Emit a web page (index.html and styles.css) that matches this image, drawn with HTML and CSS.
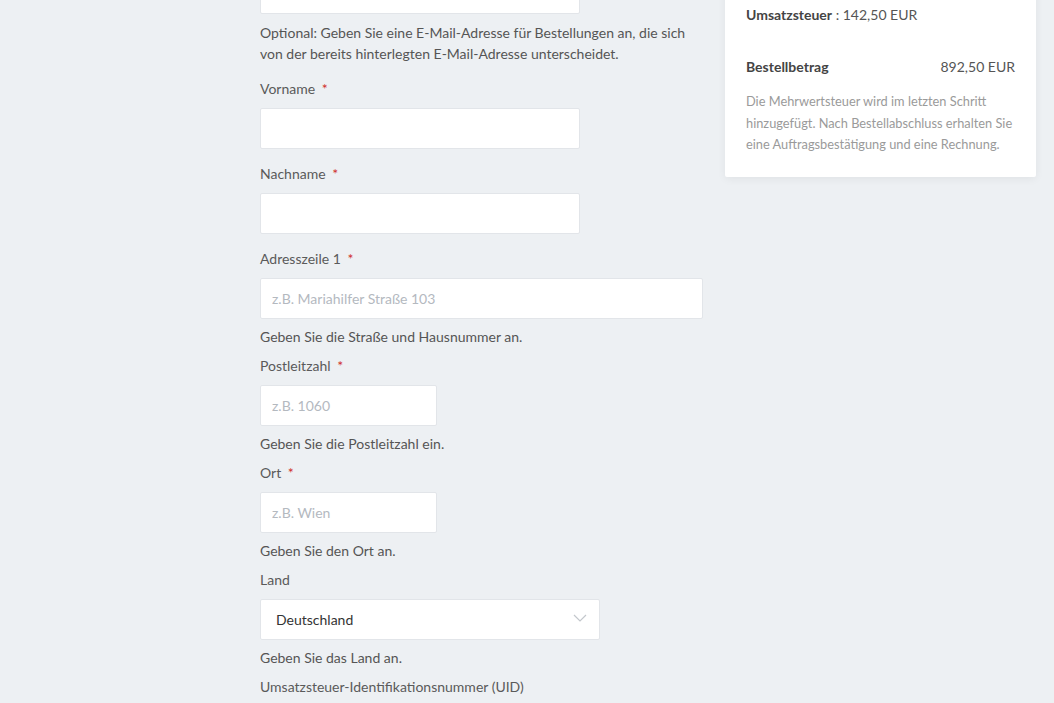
FILE: index.html
```html
<!DOCTYPE html>
<html lang="de">
<head>
    <meta charset="UTF-8">
    <meta name="viewport" content="width=device-width, initial-scale=1.0">
    <title>Rechnungsadresse</title>
    <link rel="stylesheet" href="styles.css">
</head>
<body>
    <div class="checkout">
        <form class="address-form">
            <div class="field field-first">
                <input type="email" class="input input-medium">
                <p class="help">Optional: Geben Sie eine E-Mail-Adresse für Bestellungen an, die sich von der bereits hinterlegten E-Mail-Adresse unterscheidet.</p>
            </div>
            <div class="field">
                <label for="firstname">Vorname <span class="req">*</span></label>
                <input type="text" id="firstname" class="input input-medium">
            </div>
            <div class="field">
                <label for="lastname">Nachname <span class="req">*</span></label>
                <input type="text" id="lastname" class="input input-medium">
            </div>
            <div class="field">
                <label for="street">Adresszeile 1 <span class="req">*</span></label>
                <input type="text" id="street" class="input input-wide" placeholder="z.B. Mariahilfer Straße 103">
                <p class="help">Geben Sie die Straße und Hausnummer an.</p>
            </div>
            <div class="field">
                <label for="zip">Postleitzahl <span class="req">*</span></label>
                <input type="text" id="zip" class="input input-small" placeholder="z.B. 1060">
                <p class="help">Geben Sie die Postleitzahl ein.</p>
            </div>
            <div class="field">
                <label for="city">Ort <span class="req">*</span></label>
                <input type="text" id="city" class="input input-small" placeholder="z.B. Wien">
                <p class="help">Geben Sie den Ort an.</p>
            </div>
            <div class="field">
                <label for="country">Land</label>
                <div class="select">
                    <select id="country">
                        <option>Deutschland</option>
                        <option>Österreich</option>
                        <option>Schweiz</option>
                    </select>
                    <svg class="chevron" width="14" height="8" viewBox="0 0 14 8"><path d="M1 1l6 6 6-6" fill="none" stroke="#c3c7cc" stroke-width="1.2"/></svg>
                </div>
                <p class="help">Geben Sie das Land an.</p>
            </div>
            <div class="field">
                <label for="uid">Umsatzsteuer-Identifikationsnummer (UID)</label>
                <input type="text" id="uid" class="input input-medium">
            </div>
        </form>

        <aside class="summary">
            <div class="summary-row"><strong>Umsatzsteuer</strong> : 142,50 EUR</div>
            <div class="summary-total">
                <strong>Bestellbetrag</strong>
                <span>892,50 EUR</span>
            </div>
            <p class="summary-note">Die Mehrwertsteuer wird im letzten Schritt hinzugefügt. Nach Bestellabschluss erhalten Sie eine Auftragsbestätigung und eine Rechnung.</p>
        </aside>
    </div>
</body>
</html>
```

FILE: styles.css
```css
body {
    margin: 0;
    font-family: Lato, "Open Sans", sans-serif;
    font-size: 14px;
    color: #555;
    background-color: #edf0f3;
    overflow: hidden;
}
.checkout {
    display: flex;
    align-items: flex-start;
    gap: 22px;
    padding: 0 18px 0 260px;
    margin-top: -27px;
}
.address-form {
    width: 443px;
    flex-shrink: 0;
}
.field {
    display: flex;
    flex-direction: column;
    align-items: flex-start;
    margin-bottom: 8px;
}
.field-first {
    margin-bottom: 14px;
}
label {
    display: block;
    line-height: 22px;
    margin-bottom: 8px;
    color: #5a5a5a;
}
.req {
    color: #d0312d;
    margin-left: 3px;
}
.input,
.select select {
    display: block;
    height: 41px;
    padding: 0 11px;
    border: 1px solid #e2e5e9;
    border-radius: 2px;
    background: #fff;
    box-sizing: border-box;
    font-family: inherit;
    font-size: 14px;
    color: #333;
}
.input,
.select {
    margin-bottom: 6px;
}
.input::placeholder {
    color: #b4b9bf;
}
.input-medium {
    width: 320px;
}
.input-wide {
    width: 443px;
}
.input-small {
    width: 177px;
}
.select {
    position: relative;
    width: 340px;
}
.select select {
    width: 100%;
    padding-left: 15px;
    appearance: none;
    -webkit-appearance: none;
    color: #333;
}
.chevron {
    position: absolute;
    right: 13px;
    top: 15px;
}
.help {
    margin: 2px 0 0;
    line-height: 20px;
    color: #555;
}
.field-first .help {
    line-height: 21px;
}
.summary {
    width: 311px;
    box-sizing: border-box;
    padding: 32px 21px 21px;
    background: #fff;
    border-radius: 2px;
    box-shadow: 0 2px 8px rgba(0, 0, 0, 0.06);
}
.summary-row {
    line-height: 20px;
    color: #555;
}
.summary strong {
    color: #444;
    font-weight: 700;
}
.summary-total {
    display: flex;
    justify-content: space-between;
    margin-top: 32px;
    line-height: 20px;
    color: #555;
}
.summary-note {
    margin: 14px 0 0;
    font-size: 12.8px;
    line-height: 21.5px;
    color: #9a9a9a;
}
```
